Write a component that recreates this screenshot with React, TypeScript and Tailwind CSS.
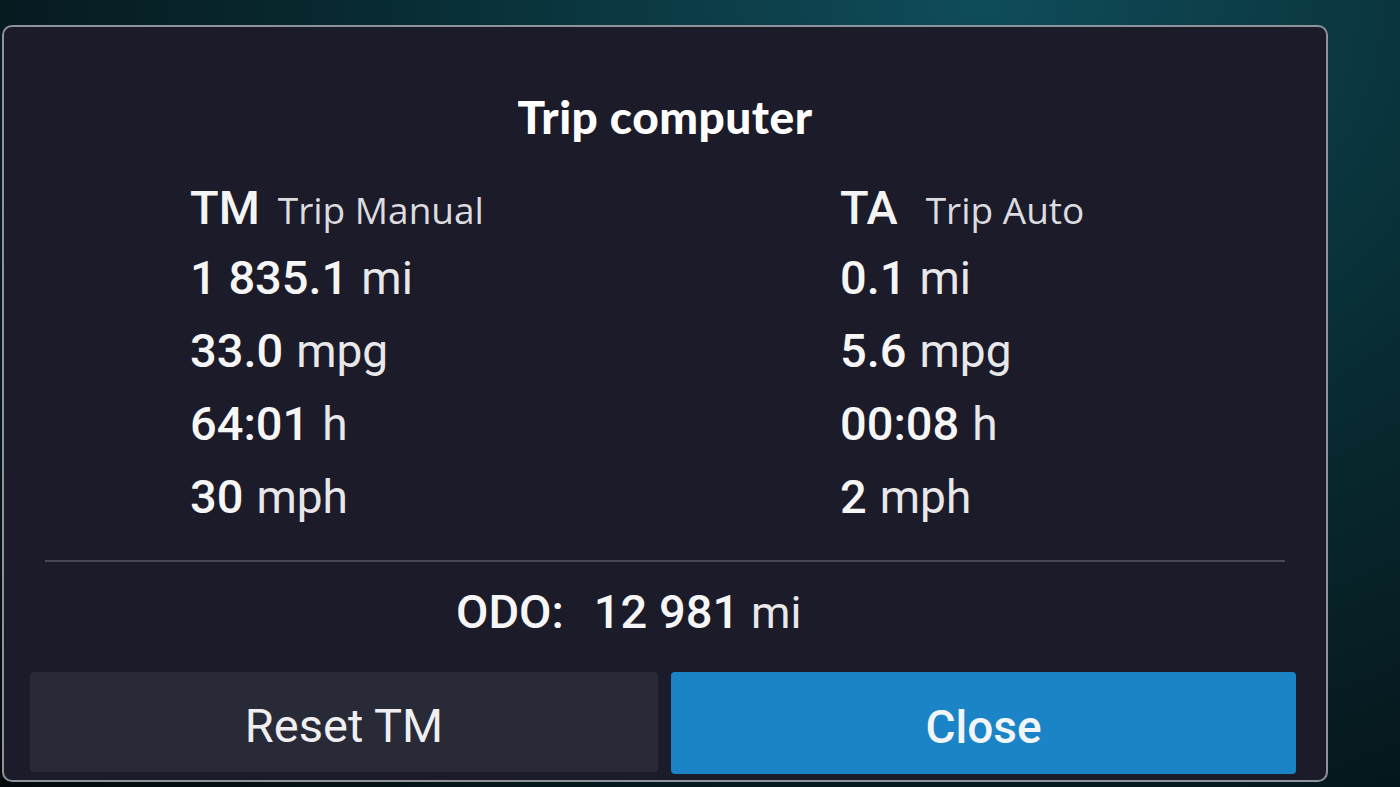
import React from "react";

type Stat = { value: string; unit: string };

const tripManual: Stat[] = [
  { value: "1 835.1", unit: "mi" },
  { value: "33.0", unit: "mpg" },
  { value: "64:01", unit: "h" },
  { value: "30", unit: "mph" },
];

const tripAuto: Stat[] = [
  { value: "0.1", unit: "mi" },
  { value: "5.6", unit: "mpg" },
  { value: "00:08", unit: "h" },
  { value: "2", unit: "mph" },
];

const TripColumn: React.FC<{ code: string; label: string; stats: Stat[]; gap: string }> = ({
  code,
  label,
  stats,
  gap,
}) => (
  <div className="flex flex-col">
    {/* Header: short code + name */}
    <div className="h-[68px] leading-[68px] whitespace-nowrap">
      <span className="font-medium text-[47px] leading-none text-[#f4f4f4]">{code}</span>
      <span
        className={`${gap} text-[37px] leading-none text-[#dcdce0]`}
        style={{ fontFamily: '"Open Sans", "Noto Sans", sans-serif' }}
      >
        {label}
      </span>
    </div>
    {stats.map((s) => (
      <div key={s.unit} className="h-[73px] leading-[73px] whitespace-nowrap">
        <span className="font-medium text-[47px] leading-none text-[#f6f6f6]">{s.value}</span>
        <span className="ml-[13px] text-[46px] leading-none text-[#e8e8ea]">{s.unit}</span>
      </div>
    ))}
  </div>
);

export default function App() {
  return (
    <div
      className="w-[1400px] h-[787px] overflow-hidden bg-[radial-gradient(ellipse_at_70%_0%,#0f4c59_0%,#082a31_45%,#04090c_100%)] pt-[25px] pl-[2px]"
      style={{ fontFamily: "Roboto, 'Liberation Sans', sans-serif" }}
    >
      <div className="w-[1326px] h-[757px] rounded-[10px] border-2 border-[#8d929b] bg-[#1c1b29] flex flex-col">
        {/* Title */}
        <h1
          className="mt-[63px] h-[54px] leading-[54px] text-center text-[46px] font-black text-white tracking-[0.5px]"
          style={{ fontFamily: "Lato, 'Noto Sans', sans-serif" }}
        >
          Trip computer
        </h1>

        {/* Trip columns */}
        <div className="mt-[40px] ml-[186px] grid grid-cols-[650px_1fr]">
          <TripColumn code="TM" label="Trip Manual" stats={tripManual} gap="ml-[18px]" />
          <TripColumn code="TA" label="Trip Auto" stats={tripAuto} gap="ml-[28px]" />
        </div>

        <div className="mt-[16px] mx-[41px] h-[2px] bg-[#474955]" />

        {/* Odometer */}
        <div className="mt-[26px] h-[60px] leading-[60px] pl-[452px] whitespace-nowrap">
          <span className="font-medium text-[47px] leading-none text-[#f6f6f6]">ODO:</span>
          <span className="ml-[30px] font-medium text-[47px] leading-none text-[#f6f6f6]">12 981</span>
          <span className="ml-[12px] text-[45px] leading-none text-[#e8e8ea]">mi</span>
        </div>

        {/* Actions */}
        <div className="mt-[24px] ml-[26px] mr-[30px] flex gap-[13px]">
          <button className="w-[628px] h-[100px] pt-[8px] rounded-[4px] bg-[#282a37] text-[47px] text-[#efeff1]">
            Reset TM
          </button>
          <button className="flex-1 h-[102px] pt-[8px] rounded-[4px] bg-[#1a84c6] text-[46px] font-medium text-[#f2f6f8]">
            Close
          </button>
        </div>
      </div>
    </div>
  );
}
